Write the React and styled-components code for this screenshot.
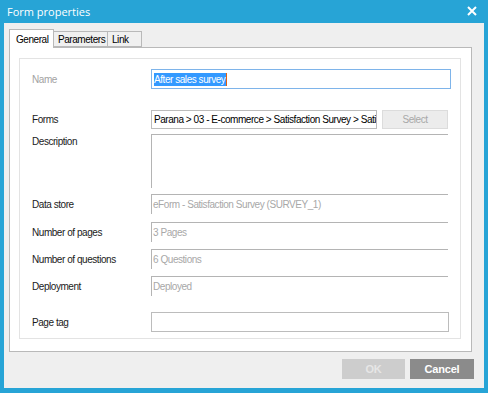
import React from 'react';
import styled, { createGlobalStyle } from 'styled-components';

const GlobalStyle = createGlobalStyle`
	html, body {
		margin: 0;
		padding: 0;
		background: #27a4d6;
	}
	* {
		box-sizing: border-box;
	}
`;

const Window = styled.div`
	width: 488px;
	height: 393px;
	background: #27a4d6;
	padding: 0 4px 5px 4px;
	display: flex;
	flex-direction: column;
	font-family: "Liberation Sans", Arial, sans-serif;
	font-size: 10px;
	letter-spacing: -0.45px;
	color: #1a1a1a;
`;

const TitleBar = styled.div`
	height: 24px;
	display: flex;
	align-items: center;
	justify-content: space-between;
	padding: 0 7px 1px 3px;
	color: #ffffff;
	font-family: "Open Sans", "Liberation Sans", sans-serif;
	font-size: 11px;
	letter-spacing: 0;
`;

const Close = styled.svg`
	width: 10px;
	height: 10px;
	display: block;
`;

const Body = styled.div`
	flex: 1;
	background: #efefef;
	padding: 6px 12px 9px 5px;
	display: flex;
	flex-direction: column;
`;

const TabStrip = styled.div`
	display: flex;
	align-items: flex-end;
	height: 18px;
	position: relative;
	z-index: 1;
`;

const Tab = styled.div`
	height: ${(p) => (p.active ? '19px' : '16px')};
	margin-bottom: ${(p) => (p.active ? '-1px' : '0')};
	padding: 0 ${(p) => (p.active ? '6px' : '4px')};
	width: ${(p) => p.w}px;
	display: flex;
	align-items: center;
	background: ${(p) => (p.active ? '#ffffff' : '#f0f0f0')};
	border: 1px solid #b9b9b9;
	border-bottom: ${(p) => (p.active ? 'none' : '1px solid #b9b9b9')};
	margin-left: ${(p) => (p.first ? '0' : '-1px')};
	color: #000;
	white-space: nowrap;
`;

const Panel = styled.div`
	height: 305px;
	background: #ffffff;
	border: 1px solid #b9b9b9;
	padding: 10px 10px 12px 9px;
	display: flex;
`;

const Group = styled.div`
	flex: 1;
	border: 1px solid #e3e3e3;
	padding: 10px 0 0 12px;
	display: flex;
	flex-direction: column;
`;

const Row = styled.div`
	display: flex;
	align-items: ${(p) => (p.top ? 'flex-start' : 'center')};
	height: ${(p) => p.h}px;
	margin-top: ${(p) => p.mt || 0}px;
`;

const Label = styled.div`
	width: 119px;
	flex: none;
	color: ${(p) => (p.disabled ? '#a2a2a2' : '#1a1a1a')};
	padding-top: ${(p) => (p.top ? '2px' : '0')};
`;

const Input = styled.div`
	width: ${(p) => p.w}px;
	height: ${(p) => p.h}px;
	border: 1px solid ${(p) => (p.focus ? '#7eb4ea' : '#bcbcbc')};
	background: #fff;
	display: flex;
	align-items: center;
	padding-left: 2px;
	overflow: hidden;
	white-space: nowrap;
	color: #000;
`;

const Selected = styled.span`
	background: #3399ff;
	color: #fff;
	line-height: 13px;
	padding-right: 1px;
	border-right: 1px solid #e06010;
`;

const ReadOnly = styled.div`
	width: ${(p) => p.w}px;
	height: ${(p) => p.h}px;
	border-top: 1px solid #b4b4b4;
	border-left: 1px solid #b4b4b4;
	display: flex;
	align-items: center;
	padding-left: 1px;
	color: #a8a8a8;
	white-space: nowrap;
`;

const SelectButton = styled.div`
	width: 66px;
	height: 19px;
	margin-left: 5px;
	background: #ececec;
	border: 1px solid #dcdcdc;
	color: #a8a8a8;
	display: flex;
	align-items: center;
	justify-content: center;
`;

const Footer = styled.div`
	display: flex;
	justify-content: flex-end;
	gap: 5px;
	margin-top: 7px;
`;

const Button = styled.div`
	width: ${(p) => p.w}px;
	height: 20px;
	background: ${(p) => (p.primary ? '#cdcdcd' : '#8b8b8b')};
	color: ${(p) => (p.primary ? '#e6e6e6' : '#ffffff')};
	font-weight: bold;
	font-size: 11px;
	letter-spacing: -0.2px;
	display: flex;
	align-items: center;
	justify-content: center;
	margin-right: ${(p) => p.mr || 0}px;
`;

const infoRows = [
	{ label: 'Data store', value: 'eForm - Satisfaction Survey (SURVEY_1)', mt: 6 },
	{ label: 'Number of pages', value: '3 Pages', mt: 8 },
	{ label: 'Number of questions', value: '6 Questions', mt: 7 },
	{ label: 'Deployment', value: 'Deployed', mt: 7 },
];

const App = () => (
	<>
		<GlobalStyle />
		<Window>
			<TitleBar>
				<span>Form properties</span>
				<Close viewBox="0 0 10 10">
					<path d="M1 1 L9 9 M9 1 L1 9" stroke="#fff" strokeWidth="2" />
				</Close>
			</TitleBar>
			<Body>
				<TabStrip>
					<Tab active first w={45}>General</Tab>
					<Tab w={55}>Parameters</Tab>
					<Tab w={35}>Link</Tab>
				</TabStrip>
				<Panel>
					<Group>
						<Row h={20}>
							<Label disabled>Name</Label>
							<Input w={300} h={20} focus>
								<Selected>After sales survey</Selected>
							</Input>
						</Row>
						<Row h={19} mt={21}>
							<Label>Forms</Label>
							<Input w={226} h={19}>
								Parana &gt; 03 - E-commerce &gt; Satisfaction Survey &gt; Satis
							</Input>
							<SelectButton>Select</SelectButton>
						</Row>
						<Row h={54} mt={5} top>
							<Label top>Description</Label>
							<ReadOnly w={297} h={54} />
						</Row>
						{infoRows.map((r) => (
							<Row h={20} mt={r.mt} key={r.label}>
								<Label>{r.label}</Label>
								<ReadOnly w={297} h={20}>{r.value}</ReadOnly>
							</Row>
						))}
						<Row h={20} mt={16}>
							<Label>Page tag</Label>
							<Input w={298} h={20} />
						</Row>
					</Group>
				</Panel>
				<Footer>
					<Button primary w={63}>OK</Button>
					<Button w={64} mr={-2}>Cancel</Button>
				</Footer>
			</Body>
		</Window>
	</>
);

export default App;
